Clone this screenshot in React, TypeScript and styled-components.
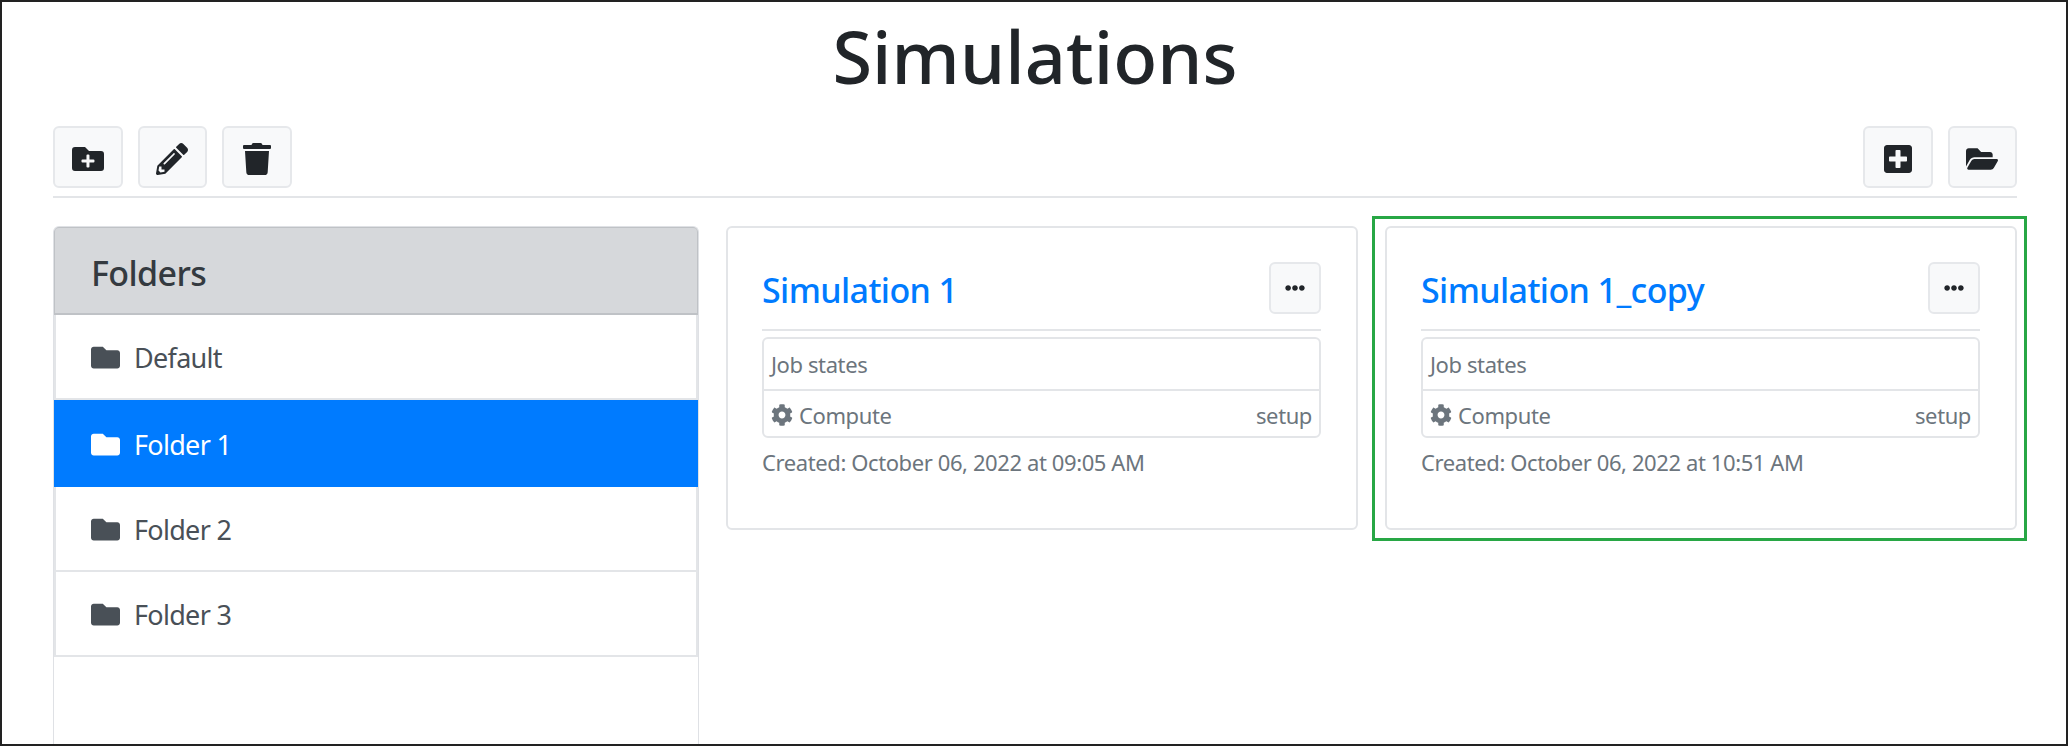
import React from "react";
import styled, { createGlobalStyle } from "styled-components";
import {
  FaCog,
  FaEllipsisH,
  FaFolder,
  FaFolderOpen,
  FaFolderPlus,
  FaPencilAlt,
  FaPlusSquare,
  FaTrash,
} from "react-icons/fa";

const GlobalStyle = createGlobalStyle`
  html, body {
    margin: 0;
    padding: 0;
    background: #fff;
  }
  * {
    box-sizing: border-box;
  }
  body {
    font-family: "Noto Sans", "Open Sans", Arial, sans-serif;
    color: #212529;
  }
`;

const Frame = styled.div`
  width: 2068px;
  height: 746px;
  border: 2px solid #222;
  padding: 0 49px 0 51px;
  overflow: hidden;
  background: #fff;
`;

const Title = styled.h1`
  margin: 0;
  height: 124px;
  padding-top: 8px;
  font-size: 72px;
  line-height: 92px;
  font-weight: 500;
  letter-spacing: 0.1px;
  text-align: center;
  color: #212529;
`;

const Toolbar = styled.div`
  display: flex;
  justify-content: space-between;
  padding-bottom: 8px;
  border-bottom: 2px solid #e3e5e8;
`;

const ToolGroup = styled.div`
  display: flex;
  gap: 15px;
`;

const ToolButton = styled.button`
  display: flex;
  align-items: center;
  justify-content: center;
  width: 69.5px;
  height: 62px;
  padding: 4px 0 0;
  border: 2px solid #e6e8eb;
  border-radius: 6px;
  background: #f8f9fa;
  color: #212529;
  font-size: 32px;
`;

const Content = styled.div`
  display: grid;
  grid-template-columns: 646px 632px 632px;
  column-gap: 27px;
  align-items: start;
  margin-top: 28px;
`;

const Sidebar = styled.aside`
  height: 520px;
  border-left: 1px solid #dfe1e5;
  border-right: 1px solid #dfe1e5;
  border-top: 1px solid #dfe1e5;
  border-radius: 6px 6px 0 0;
`;

const SidebarHeader = styled.div`
  display: flex;
  align-items: center;
  height: 88px;
  padding: 4px 0 0 36px;
  background: #d6d8db;
  border: 1px solid #bfc2c6;
  border-bottom-width: 2px;
  border-radius: 5px 5px 0 0;
  font-size: 34px;
  font-weight: 500;
  letter-spacing: -0.6px;
  color: #343a40;
`;

const FolderRow = styled.div<{ $active?: boolean }>`
  display: flex;
  align-items: center;
  gap: 14px;
  height: ${(p) => (p.$active ? 87 : 85)}px;
  padding: 2px 0 0 ${(p) => (p.$active ? 37 : 35)}px;
  font-size: 27px;
  letter-spacing: -0.7px;
  color: ${(p) => (p.$active ? "#fff" : "#495057")};
  background: ${(p) => (p.$active ? "#007bff" : "#fff")};
  border-bottom: ${(p) => (p.$active ? "none" : "2px solid #e3e5e8")};
  border-left: ${(p) => (p.$active ? "none" : "2px solid #e3e5e8")};
  border-right: ${(p) => (p.$active ? "none" : "2px solid #e3e5e8")};

  svg {
    font-size: 29px;
    color: ${(p) => (p.$active ? "#fff" : "#495057")};
  }
`;

const Card = styled.section<{ $highlighted?: boolean }>`
  position: relative;
  height: 304px;
  padding: 34px 35px 0 34px;
  border: 2px solid #e3e5e8;
  border-radius: 6px;
  background: #fff;

  ${(p) =>
    p.$highlighted &&
    `
    &::after {
      content: "";
      position: absolute;
      top: -12px;
      left: -15px;
      right: -12px;
      bottom: -13px;
      border: 3px solid #28a745;
      pointer-events: none;
    }
  `}
`;

const CardHead = styled.div`
  display: flex;
  align-items: center;
  justify-content: space-between;
  height: 69px;
  padding-bottom: 15px;
  border-bottom: 2px solid #e3e5e8;
`;

const CardTitle = styled.a`
  margin-top: 3px;
  font-size: 34px;
  font-weight: 500;
  letter-spacing: -0.6px;
  color: #007bff;
  text-decoration: none;
`;

const MenuButton = styled.button`
  display: flex;
  align-items: center;
  justify-content: center;
  width: 52px;
  height: 52px;
  padding: 0;
  border: 2px solid #e6e8eb;
  border-radius: 6px;
  background: #f8f9fa;
  color: #212529;
  font-size: 20px;
`;

const JobList = styled.div`
  margin-top: 6px;
  height: 101px;
  border: 2px solid #e3e5e8;
  border-radius: 6px;
  font-size: 22px;
  letter-spacing: -0.4px;
  color: #6c757d;
`;

const JobRow = styled.div`
  display: flex;
  align-items: center;
  justify-content: space-between;
  height: 50px;
  padding: 0 7px;

  & + & {
    height: 49px;
    border-top: 2px solid #e3e5e8;
  }
`;

const JobName = styled.span`
  display: flex;
  align-items: center;
  gap: 6px;

  svg {
    font-size: 22px;
  }
`;

const Created = styled.div`
  margin-top: 10px;
  font-size: 22px;
  line-height: 28px;
  letter-spacing: -0.4px;
  color: #6c757d;
`;

const folders = ["Default", "Folder 1", "Folder 2", "Folder 3"];

const simulations = [
  { name: "Simulation 1", created: "October 06, 2022 at 09:05 AM" },
  { name: "Simulation 1_copy", created: "October 06, 2022 at 10:51 AM", highlighted: true },
];

const App = () => {
  return (
    <>
      <GlobalStyle />
      <Frame>
        <Title>Simulations</Title>
        <Toolbar>
          <ToolGroup>
            <ToolButton><FaFolderPlus /></ToolButton>
            <ToolButton><FaPencilAlt /></ToolButton>
            <ToolButton><FaTrash /></ToolButton>
          </ToolGroup>
          <ToolGroup>
            <ToolButton><FaPlusSquare /></ToolButton>
            <ToolButton><FaFolderOpen /></ToolButton>
          </ToolGroup>
        </Toolbar>
        <Content>
          <Sidebar>
            <SidebarHeader>Folders</SidebarHeader>
            {folders.map((folder) => (
              <FolderRow key={folder} $active={folder === "Folder 1"}>
                <FaFolder />
                {folder}
              </FolderRow>
            ))}
          </Sidebar>
          {simulations.map((sim) => (
            <Card key={sim.name} $highlighted={sim.highlighted}>
              <CardHead>
                <CardTitle>{sim.name}</CardTitle>
                <MenuButton><FaEllipsisH /></MenuButton>
              </CardHead>
              <JobList>
                <JobRow>Job states</JobRow>
                <JobRow>
                  <JobName><FaCog />Compute</JobName>
                  <span>setup</span>
                </JobRow>
              </JobList>
              <Created>Created: {sim.created}</Created>
            </Card>
          ))}
        </Content>
      </Frame>
    </>
  );
};

export default App;
